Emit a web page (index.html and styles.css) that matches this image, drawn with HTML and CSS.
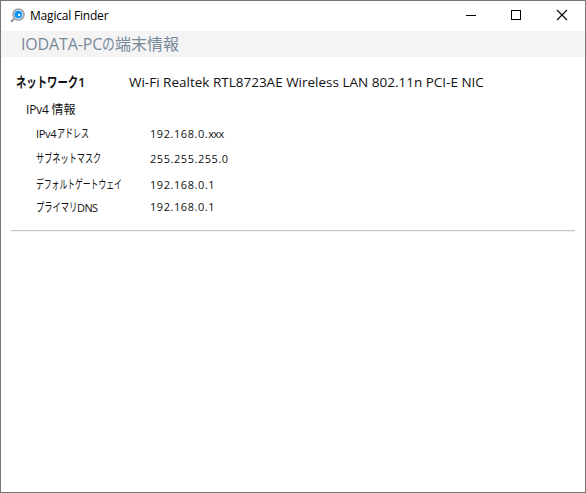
FILE: index.html
```html
<!DOCTYPE html>
<html lang="ja">
<head>
<meta charset="utf-8">
<title>Magical Finder</title>
<link rel="stylesheet" href="styles.css">
</head>
<body>
<div class="window">
  <header class="titlebar">
    <svg class="app-icon" width="16" height="16" viewBox="0 0 16 16">
      <path d="M1 13.8L4.6 10.4" stroke="#8b8f98" stroke-width="2" fill="none"/>
      <circle cx="8.5" cy="6.5" r="5.4" fill="#e8eef5" stroke="#a0a4ad" stroke-width="1.8"/>
      <circle cx="8.3" cy="6.5" r="3.8" fill="#0c94f5"/>
      <circle cx="9.2" cy="6.9" r="1.2" fill="#fff"/>
    </svg>
    <span class="app-name">Magical Finder</span>
    <svg class="controls" width="104" height="12" viewBox="0 0 104 12" fill="none" stroke="#000" stroke-width="1">
      <path d="M0 6.5H10"/>
      <rect x="45.5" y="1.5" width="9" height="9"/>
      <path d="M91 1L101 11M101 1L91 11" stroke-width="1.1"/>
    </svg>
  </header>
  <h1 class="heading"><span class="head-latin">IODATA-PC</span><span class="kana no">の</span>端末情報</h1>
  <main class="content">
    <div class="network">
      <strong class="net-name"><span class="kana six">ネットワーク</span><span class="index">1</span></strong>
      <span class="adapter">Wi-Fi Realtek RTL8723AE Wireless LAN 802.11n PCI-E NIC</span>
    </div>
    <h2 class="section"><span class="section-latin">IPv4</span>情報</h2>
    <dl class="details">
      <dt><span class="ip">IPv4</span><span class="kana four">アドレス</span></dt><dd>192.168.0.<span class="mask">xxx</span></dd>
      <dt><span class="kana eight">サブネットマスク</span></dt><dd>255.255.255.0</dd>
      <dt><span class="kana eleven">デフォルトゲートウェイ</span></dt><dd>192.168.0.1</dd>
      <dt class="last"><span class="kana five">プライマリ</span><span class="dns">DNS</span></dt><dd>192.168.0.1</dd>
    </dl>
    <hr class="divider">
  </main>
</div>
</body>
</html>
```
FILE: styles.css
```css
* { box-sizing: border-box; }
body { margin: 0; background: #fff; color: #111; font-family: "Open Sans", "Noto Sans CJK JP", sans-serif; }
.window { width: 586px; height: 493px; border: 1px solid #777; overflow: hidden; }
.titlebar { height: 30px; display: flex; align-items: center; padding: 0 16px 2px 9px; color: #000; }
.app-icon { margin-top: 1px; }
.app-name { margin: 1px 0 0 4px; font-size: 12px; letter-spacing: -0.2px; }
.controls { margin-left: auto; margin-right: -1px; }
.kana { display: inline-block; white-space: nowrap; transform-origin: 0 50%; }
.heading { margin: 0; height: 26px; padding-left: 20px; background: #f4f4f4; color: #778899; font-size: 16px; font-weight: 400; line-height: 26px; white-space: nowrap; }
.head-latin { display: inline-block; width: 81px; letter-spacing: -0.15px; }
.no { width: 13px; transform: scaleX(.8); }
.content { padding: 15px 10px 0; }
.network { height: 20px; display: flex; padding-left: 5px; line-height: 20px; white-space: nowrap; }
.net-name { width: 113px; font-size: 13px; }
.six { width: 62px; font-size: 14px; font-weight: 600; transform: scaleX(.74); }
.index { font-weight: 600; }
.adapter { font-size: 13.5px; }
.section { margin: 9px 0 0 15px; height: 18px; font-size: 12px; font-weight: 400; line-height: 18px; }
.section-latin { display: inline-block; width: 25.5px; letter-spacing: -0.2px; }
.details { display: grid; grid-template-columns: 114px 1fr; grid-template-rows: 25px 26px 22px 24px; margin: 2px 0 0 25px; line-height: 25px; white-space: nowrap; }
dt { font-size: 11px; }
dd { margin: 0; font-size: 11px; letter-spacing: 0.55px; }
.last { padding-top: 1px; }
.ip { display: inline-block; width: 21px; letter-spacing: -0.3px; }
.four { width: 32px; font-size: 12px; transform: scaleX(.67); }
.eight { width: 65px; font-size: 12px; transform: scaleX(.68); }
.eleven { width: 86px; font-size: 12px; transform: scaleX(.65); }
.five { width: 41px; font-size: 12px; transform: scaleX(.69); }
.dns { letter-spacing: -0.6px; }
.mask { letter-spacing: -0.6px; }
.divider { height: 2px; margin: 12px 0 0; border: 0; background: linear-gradient(#c5c5c5 50%, #f4f4f4 50%); }
```
